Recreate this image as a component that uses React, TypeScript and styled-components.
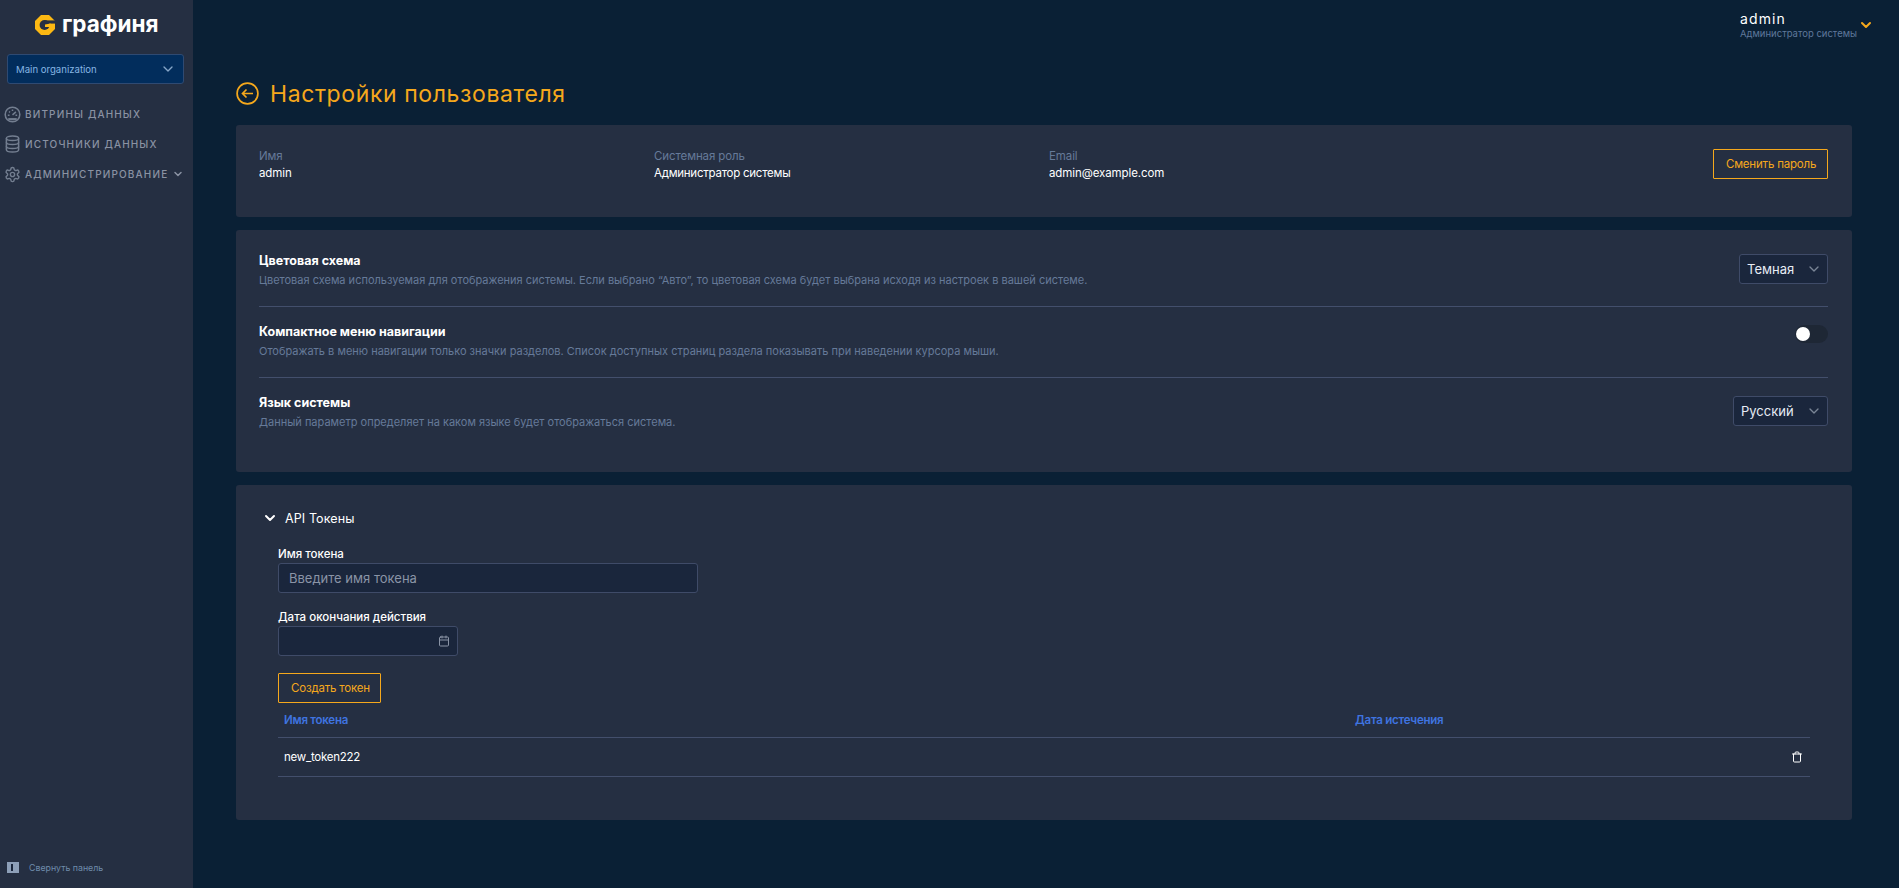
import React from "react";
import styled, { createGlobalStyle } from "styled-components";
import { ChevronDown, Calendar, Trash } from "lucide-react";

const FONT = `Inter, "Noto Sans", "Liberation Sans", sans-serif`;

const COLOR = {
  page: "#0a2035",
  panel: "#252f42",
  line: "#434f6c",
  field: "#1a263c",
  fieldBorder: "#3f4b68",
  orange: "#f5a81c",
  muted: "#667a99",
  blue: "#3f74e0",
};

const GlobalStyle = createGlobalStyle`
  html, body {
    margin: 0;
    padding: 0;
    background: ${COLOR.page};
    font-family: ${FONT};
    color: #fff;
  }
  * { box-sizing: border-box; }
`;

const LogoMark = () => (
  <svg width="20" height="20" viewBox="0 0 20 20">
    <path d="M6 0h8l6 6v8l-6 6H6l-6-6V6z" fill="#fdb913" />
    <circle cx="9.6" cy="10" r="5" fill={COLOR.panel} />
    <path d="M9.6 5.4H20v3.2H9.6z" fill={COLOR.panel} />
    <path d="M10 9.6l5.6-1v3.4l-5.6 0z" fill="#fdb913" />
  </svg>
);

const GaugeIcon = () => (
  <svg width="17" height="17" viewBox="0 0 20 20" fill="none" stroke="#737e90" strokeWidth="1.8">
    <circle cx="10" cy="10" r="8.6" />
    <path d="M10 10.5l4-3.5M4.5 11h2M13.5 11h2M6 6.5l1 1M10 4v2" />
    <path d="M5 15.5h10" strokeWidth="2.6" />
  </svg>
);

const DatabaseIcon = () => (
  <svg width="17" height="18" viewBox="0 0 20 22" fill="none" stroke="#737e90" strokeWidth="1.8">
    <ellipse cx="10" cy="4" rx="7.5" ry="2.8" />
    <path d="M2.5 4v14c0 1.6 3.4 2.8 7.5 2.8s7.5-1.2 7.5-2.8V4" />
    <path d="M2.5 8.8c0 1.6 3.4 2.8 7.5 2.8s7.5-1.2 7.5-2.8M2.5 13.6c0 1.6 3.4 2.8 7.5 2.8s7.5-1.2 7.5-2.8" />
  </svg>
);

const GearIcon = () => (
  <svg width="17" height="17" viewBox="0 0 24 24" fill="none" stroke="#737e90" strokeWidth="2">
    <path d="M12.22 2h-.44a2 2 0 0 0-2 2v.18a2 2 0 0 1-1 1.73l-.43.25a2 2 0 0 1-2 0l-.15-.08a2 2 0 0 0-2.73.73l-.22.38a2 2 0 0 0 .73 2.73l.15.1a2 2 0 0 1 1 1.72v.51a2 2 0 0 1-1 1.74l-.15.09a2 2 0 0 0-.73 2.73l.22.38a2 2 0 0 0 2.73.73l.15-.08a2 2 0 0 1 2 0l.43.25a2 2 0 0 1 1 1.73V20a2 2 0 0 0 2 2h.44a2 2 0 0 0 2-2v-.18a2 2 0 0 1 1-1.73l.43-.25a2 2 0 0 1 2 0l.15.08a2 2 0 0 0 2.73-.73l.22-.39a2 2 0 0 0-.73-2.73l-.15-.08a2 2 0 0 1-1-1.74v-.5a2 2 0 0 1 1-1.74l.15-.09a2 2 0 0 0 .73-2.73l-.22-.38a2 2 0 0 0-2.73-.73l-.15.08a2 2 0 0 1-2 0l-.43-.25a2 2 0 0 1-1-1.73V4a2 2 0 0 0-2-2z" />
    <circle cx="12" cy="12" r="3" />
  </svg>
);

const BackIcon = () => (
  <svg width="23" height="23" viewBox="0 0 23 23" fill="none" stroke={COLOR.orange} strokeWidth="1.7">
    <circle cx="11.5" cy="11.5" r="10.4" />
    <path d="M17 11.5H6.5M10.5 7.5l-4 4 4 4" />
  </svg>
);

const CollapseIcon = () => (
  <svg width="12" height="11" viewBox="0 0 12 11">
    <rect width="12" height="11" fill="#8d9fb8" />
    <rect x="4" y="2" width="2" height="7" fill="#1a263c" />
  </svg>
);

const Page = styled.div`
  display: flex;
  width: 100%;
  min-height: 888px;
  background: ${COLOR.page};
`;

const Sidebar = styled.aside`
  width: 193px;
  flex-shrink: 0;
  background: ${COLOR.panel};
  display: flex;
  flex-direction: column;
  padding-top: 12px;
`;

const Logo = styled.div`
  display: flex;
  align-items: center;
  gap: 7px;
  height: 26px;
  padding-left: 35px;
`;

const LogoText = styled.span`
  font-size: 22.5px;
  line-height: 24px;
  font-weight: 700;
  color: #fff;
  margin-top: -3px;
`;

const OrgSelect = styled.div`
  margin: 16px 9px 0 7px;
  height: 30px;
  background: #022d5c;
  border: 1px solid #2f4a72;
  border-radius: 3px;
  display: flex;
  align-items: center;
  justify-content: space-between;
  padding: 0 7px 0 8px;
  font-size: 9.6px;
  color: #86b6e4;
`;

const Nav = styled.nav`
  margin-top: 19px;
  display: flex;
  flex-direction: column;
  gap: 8px;
`;

const NavItem = styled.div`
  display: flex;
  align-items: center;
  height: 22px;
  padding-left: 4px;
  gap: 4px;
  font-size: 10px;
  font-weight: 500;
  letter-spacing: 1.15px;
  text-transform: uppercase;
  color: #8a92a3;
  white-space: nowrap;

  svg {
    flex-shrink: 0;
  }
`;

const NavChevron = styled(ChevronDown)`
  margin-left: 0;
  color: #8a92a3;
`;

const SidebarFoot = styled.div`
  margin-top: auto;
  display: flex;
  align-items: center;
  gap: 10px;
  padding: 0 0 15px 7px;
  font-size: 8.8px;
  color: #6f8cab;
`;

const Main = styled.main`
  flex: 1;
  min-width: 0;
  padding: 0 47px 0 43px;
`;

const TopBar = styled.header`
  height: 82px;
  display: flex;
  justify-content: flex-end;
  padding: 11px 0 0;
  margin-right: -22px;
`;

const UserBox = styled.div`
  display: flex;
  flex-direction: column;
`;

const UserName = styled.span`
  font-size: 14px;
  line-height: 16px;
  letter-spacing: 1.1px;
`;

const UserRole = styled.span`
  font-size: 9.5px;
  line-height: 14px;
  color: #5f789b;
`;

const UserChevron = styled(ChevronDown)`
  color: ${COLOR.orange};
  margin: 6px 0 0 1px;
`;

const TitleRow = styled.div`
  display: flex;
  align-items: center;
  gap: 11px;
  height: 23px;
  margin-bottom: 20px;
`;

const Title = styled.h1`
  margin: 0;
  font-size: 23px;
  font-weight: 400;
  color: ${COLOR.orange};
  letter-spacing: 0.6px;
`;

const Card = styled.section`
  background: ${COLOR.panel};
  border-radius: 3px;
  margin-bottom: 13px;
`;

const ProfileCard = styled(Card)`
  height: 92px;
  padding: 24px 24px 0 23px;
  display: flex;
  align-items: flex-start;
`;

const ProfileCol = styled.div`
  width: 395px;
  display: flex;
  flex-direction: column;
  gap: 2px;
`;

const MutedLabel = styled.span`
  font-size: 11.5px;
  line-height: 15px;
  color: ${COLOR.muted};
  letter-spacing: -0.1px;
`;

const Value = styled.span<{ $latin?: boolean }>`
  font-size: 11.5px;
  line-height: 15px;
  font-weight: 400;
  color: #fff;
  letter-spacing: ${(p) => (p.$latin ? "-0.1px" : "-0.25px")};
`;

const OutlineButton = styled.button`
  height: 30px;
  padding: 0 12px;
  background: transparent;
  border: 1.5px solid ${COLOR.orange};
  border-radius: 1px;
  color: ${COLOR.orange};
  font: 400 11.5px ${FONT};
  letter-spacing: -0.2px;
  white-space: nowrap;
`;

const ProfileButton = styled(OutlineButton)`
  width: 115px;
  margin-left: auto;
`;

const SettingsCard = styled(Card)`
  height: 242px;
  padding: 6px 24px 0 23px;
`;

const SettingRow = styled.div<{ $last?: boolean }>`
  height: 71px;
  display: flex;
  align-items: flex-start;
  justify-content: space-between;
  border-bottom: ${(p) => (p.$last ? "none" : `1px solid ${COLOR.line}`)};
  padding-top: 16px;
`;

const SettingText = styled.div`
  display: flex;
  flex-direction: column;
  gap: 4px;
`;

const SettingTitle = styled.span`
  font-size: 12.5px;
  line-height: 17px;
  font-weight: 700;
  color: #fff;
`;

const SettingDesc = styled.span`
  font-size: 11px;
  line-height: 15px;
  color: ${COLOR.muted};
`;

const SelectBox = styled.div<{ $width: number }>`
  width: ${(p) => p.$width}px;
  height: 30px;
  margin-top: 2px;
  background: ${COLOR.field};
  border: 1px solid ${COLOR.fieldBorder};
  border-radius: 3px;
  display: flex;
  align-items: center;
  justify-content: space-between;
  padding: 0 5px 0 7px;
  font-size: 13px;
  color: #e6ecf5;
`;

const SelectChevron = styled(ChevronDown)`
  color: #7a8596;
`;

const Toggle = styled.div`
  position: relative;
  width: 33px;
  height: 18px;
  margin-top: 2px;
  border-radius: 9px;
  background: #1e2735;
`;

const ToggleKnob = styled.span`
  position: absolute;
  top: 2px;
  left: 1px;
  width: 14px;
  height: 14px;
  border-radius: 50%;
  background: #fff;
`;

const TokensCard = styled(Card)`
  height: 335px;
  padding: 22px 42px 0 26px;
`;

const TokensHead = styled.div`
  display: flex;
  align-items: center;
  gap: 7px;
  height: 22px;
  font-size: 12.5px;
  font-weight: 400;
  color: #fff;
  letter-spacing: 0.1px;
`;

const TokensBody = styled.div`
  margin-left: 16px;
  margin-top: 18px;
  display: flex;
  flex-direction: column;
`;

const FieldLabel = styled.label`
  font-size: 11.5px;
  line-height: 15px;
  font-weight: 500;
  color: #fff;
  margin-bottom: 1px;
`;

const TextField = styled.div<{ $width: number }>`
  width: ${(p) => p.$width}px;
  height: 30px;
  background: ${COLOR.field};
  border: 1px solid ${COLOR.fieldBorder};
  border-radius: 3px;
  display: flex;
  align-items: center;
  justify-content: space-between;
  padding: 0 7px 0 10px;
  font-size: 13px;
  color: #8a94a6;
  margin-bottom: 17px;
`;

const CreateButton = styled(OutlineButton)`
  width: 103px;
`;

const TableRow = styled.div<{ $head?: boolean }>`
  display: grid;
  grid-template-columns: 1071px 1fr 12px;
  align-items: center;
  height: ${(p) => (p.$head ? 35 : 39)}px;
  padding: 0 7px 0 6px;
  border-bottom: 1px solid ${COLOR.line};
  font-size: 11.5px;
  font-weight: ${(p) => (p.$head ? 600 : 400)};
  letter-spacing: -0.25px;
  color: ${(p) => (p.$head ? COLOR.blue : "#fff")};
`;

const App: React.FC = () => {
  return (
    <Page>
      <GlobalStyle />
      <Sidebar>
        <Logo>
          <LogoMark />
          <LogoText>графиня</LogoText>
        </Logo>
        <OrgSelect>
          Main organization
          <ChevronDown size={16} color="#86a6c8" />
        </OrgSelect>
        <Nav>
          <NavItem><GaugeIcon />Витрины данных</NavItem>
          <NavItem><DatabaseIcon />Источники данных</NavItem>
          <NavItem><GearIcon />Администрирование<NavChevron size={12} strokeWidth={3} /></NavItem>
        </Nav>
        <SidebarFoot>
          <CollapseIcon />
          Свернуть панель
        </SidebarFoot>
      </Sidebar>
      <Main>
        <TopBar>
          <UserBox>
            <UserName>admin</UserName>
            <UserRole>Администратор системы</UserRole>
          </UserBox>
          <UserChevron size={16} strokeWidth={3} />
        </TopBar>
        <TitleRow>
          <BackIcon />
          <Title>Настройки пользователя</Title>
        </TitleRow>
        <ProfileCard>
          <ProfileCol>
            <MutedLabel>Имя</MutedLabel>
            <Value $latin>admin</Value>
          </ProfileCol>
          <ProfileCol>
            <MutedLabel>Системная роль</MutedLabel>
            <Value>Администратор системы</Value>
          </ProfileCol>
          <ProfileCol>
            <MutedLabel>Email</MutedLabel>
            <Value $latin>admin@example.com</Value>
          </ProfileCol>
          <ProfileButton>Сменить пароль</ProfileButton>
        </ProfileCard>
        <SettingsCard>
          <SettingRow>
            <SettingText>
              <SettingTitle>Цветовая схема</SettingTitle>
              <SettingDesc>Цветовая схема используемая для отображения системы. Если выбрано “Авто”, то цветовая схема будет выбрана исходя из настроек в вашей системе.</SettingDesc>
            </SettingText>
            <SelectBox $width={89}>Темная<SelectChevron size={16} /></SelectBox>
          </SettingRow>
          <SettingRow>
            <SettingText>
              <SettingTitle>Компактное меню навигации</SettingTitle>
              <SettingDesc>Отображать в меню навигации только значки разделов. Список доступных страниц раздела показывать при наведении курсора мыши.</SettingDesc>
            </SettingText>
            <Toggle><ToggleKnob /></Toggle>
          </SettingRow>
          <SettingRow $last>
            <SettingText>
              <SettingTitle>Язык системы</SettingTitle>
              <SettingDesc>Данный параметр определяет на каком языке будет отображаться система.</SettingDesc>
            </SettingText>
            <SelectBox $width={95}>Русский<SelectChevron size={16} /></SelectBox>
          </SettingRow>
        </SettingsCard>
        <TokensCard>
          <TokensHead>
            <ChevronDown size={16} strokeWidth={3} />
            API Токены
          </TokensHead>
          <TokensBody>
            <FieldLabel>Имя токена</FieldLabel>
            <TextField $width={420}>Введите имя токена</TextField>
            <FieldLabel>Дата окончания действия</FieldLabel>
            <TextField $width={180}>
              <span />
              <Calendar size={12} color="#8a94a6" />
            </TextField>
            <CreateButton>Создать токен</CreateButton>
            <TableRow $head>
              <span>Имя токена</span>
              <span>Дата истечения</span>
              <span />
            </TableRow>
            <TableRow>
              <span>new_token222</span>
              <span />
              <Trash size={12} color="#fff" />
            </TableRow>
          </TokensBody>
        </TokensCard>
      </Main>
    </Page>
  );
};

export default App;
